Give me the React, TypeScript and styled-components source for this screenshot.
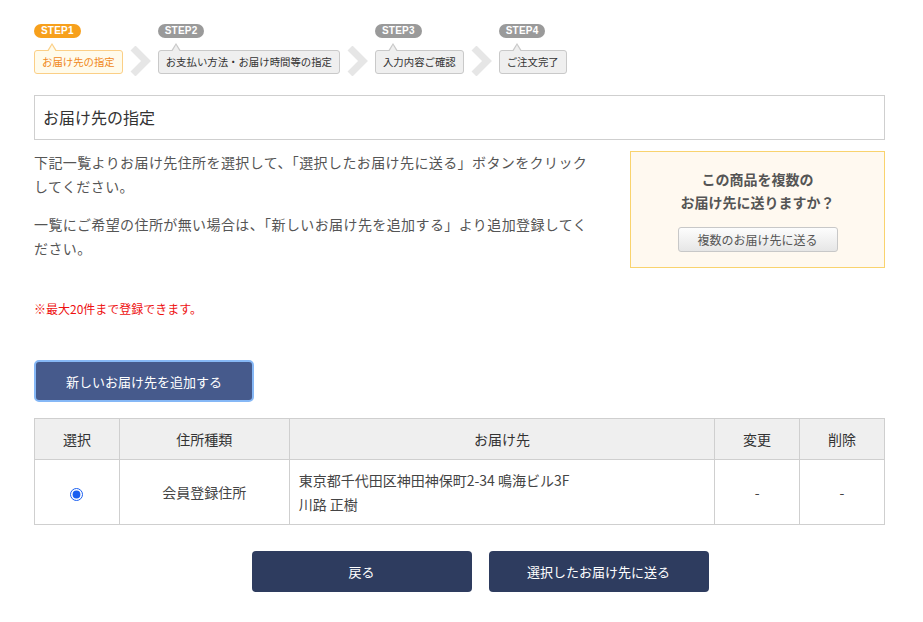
import React from "react";
import styled, { createGlobalStyle } from "styled-components";

const GlobalStyle = createGlobalStyle`
  html, body { margin: 0; padding: 0; background: #fff; }
  body {
    font-family: "Noto Sans CJK JP", "Noto Sans", "Liberation Sans", sans-serif;
    color: #333;
  }
  * { box-sizing: border-box; }
`;

const Page = styled.div`
  width: 851px;
  margin-left: 34px;
  padding-top: 24px;
  padding-bottom: 30px;
`;

const StepBar = styled.div`
  display: flex;
  align-items: flex-end;
`;

const Step = styled.div`
  display: flex;
  flex-direction: column;
  align-items: flex-start;
`;

const Badge = styled.div<{ $active?: boolean }>`
  height: 14px;
  padding: 0 7px;
  border-radius: 7px;
  background: ${(p) => (p.$active ? "#f7a01c" : "#9a9a9a")};
  color: #fff;
  font-family: "Liberation Sans", Arial, sans-serif;
  font-weight: bold;
  font-size: 10px;
  line-height: 14px;
  letter-spacing: 0.2px;
`;

const StepLabel = styled.div<{ $active?: boolean }>`
  position: relative;
  margin-top: 12px;
  height: 24px;
  padding: 0 7px;
  border-radius: 3px;
  border: 1px solid ${(p) => (p.$active ? "#fbcf86" : "#c9c9c9")};
  background: ${(p) => (p.$active ? "#fffbeb" : "#efefef")};
  color: ${(p) => (p.$active ? "#f08820" : "#333")};
  font-size: 10.4px;
  line-height: 22px;
  white-space: nowrap;
  &::before {
    content: "";
    position: absolute;
    left: 12px;
    top: -8px;
    border-left: 5px solid transparent;
    border-right: 5px solid transparent;
    border-bottom: 8px solid ${(p) => (p.$active ? "#fbcf86" : "#c9c9c9")};
  }
  &::after {
    content: "";
    position: absolute;
    left: 13px;
    top: -6px;
    border-left: 4px solid transparent;
    border-right: 4px solid transparent;
    border-bottom: 7px solid ${(p) => (p.$active ? "#fffbeb" : "#efefef")};
  }
`;

const Chevron = styled.svg`
  display: block;
  width: 22px;
  height: 30px;
  margin: 0 7px 0 6px;
  position: relative;
  top: 2px;
`;

const Arrow = () => (
  <Chevron viewBox="0 0 22 30">
    <path d="M4 2 L17 15 L4 28" fill="none" stroke="#e6e6e6" strokeWidth="7" />
  </Chevron>
);

const TitleBox = styled.div`
  margin-top: 21px;
  height: 45px;
  border: 1px solid #cfcfcf;
  padding: 0 8px;
  font-size: 16px;
  line-height: 43px;
  color: #333;
`;

const IntroRow = styled.div`
  display: flex;
  justify-content: space-between;
  align-items: flex-start;
  margin-top: 10px;
`;

const IntroText = styled.div`
  width: 555px;
`;

const Para = styled.p`
  margin: 0 0 14px 0;
  font-size: 14px;
  letter-spacing: 0.4px;
  line-height: 24px;
  color: #555;
`;

const Note = styled.p`
  margin: 40px 0 0 0;
  font-size: 12px;
  line-height: 18px;
  color: #ee1111;
`;

const MultiBox = styled.div`
  width: 255px;
  margin-top: 1px;
  padding: 16px 0 15px;
  background: #fff9f0;
  border: 1px solid #f9d36e;
  display: flex;
  flex-direction: column;
  align-items: center;
`;

const MultiTitle = styled.div`
  font-size: 14px;
  font-weight: bold;
  line-height: 23px;
  color: #555;
  text-align: center;
`;

const GrayButton = styled.button`
  margin-top: 13px;
  width: 160px;
  height: 25px;
  border: 1px solid #c8c8c8;
  border-radius: 3px;
  background: linear-gradient(#fdfdfd, #e6e6e6);
  font-family: inherit;
  font-size: 12px;
  color: #555;
  padding: 0;
`;

const AddButton = styled.button`
  margin-top: 42px;
  width: 220px;
  height: 42px;
  border-radius: 5px;
  border: 2px solid #86b8f6;
  background: #465a8c;
  color: #fff;
  font-family: inherit;
  font-size: 13px;
  padding: 0;
`;

const Table = styled.table`
  margin-top: 16px;
  width: 851px;
  border-collapse: collapse;
  font-size: 14px;
  color: #333;
`;

const Th = styled.th<{ $w: number }>`
  width: ${(p) => p.$w}px;
  height: 41px;
  border: 1px solid #cfcfcf;
  background: #efefef;
  font-weight: normal;
  text-align: center;
  padding: 0;
`;

const Td = styled.td<{ $left?: boolean }>`
  height: 65px;
  border: 1px solid #cfcfcf;
  text-align: ${(p) => (p.$left ? "left" : "center")};
  padding: ${(p) => (p.$left ? "8px 9px" : "0")};
  line-height: 24px;
  vertical-align: ${(p) => (p.$left ? "top" : "middle")};
  color: #444;
`;

const Radio = styled.input`
  margin: 0;
  width: 13px;
  height: 13px;
  accent-color: #1a5ff0;
  vertical-align: middle;
`;

const Actions = styled.div`
  margin-top: 26px;
  padding-left: 41px;
  display: flex;
  justify-content: center;
  gap: 17px;
`;

const NavyButton = styled.button`
  width: 220px;
  height: 41px;
  border: none;
  border-radius: 4px;
  background: #2e3c5f;
  color: #fff;
  font-family: inherit;
  font-size: 13px;
  padding: 0;
`;

const steps = [
  { badge: "STEP1", label: "お届け先の指定", active: true },
  { badge: "STEP2", label: "お支払い方法・お届け時間等の指定" },
  { badge: "STEP3", label: "入力内容ご確認" },
  { badge: "STEP4", label: "ご注文完了" },
];

export default function App() {
  return (
    <>
      <GlobalStyle />
      <Page>
        <StepBar>
          {steps.map((s, i) => (
            <React.Fragment key={s.badge}>
              {i > 0 && <Arrow />}
              <Step>
                <Badge $active={s.active}>{s.badge}</Badge>
                <StepLabel $active={s.active}>{s.label}</StepLabel>
              </Step>
            </React.Fragment>
          ))}
        </StepBar>

        <TitleBox>お届け先の指定</TitleBox>

        <IntroRow>
          <IntroText>
            <Para>
              下記一覧よりお届け先住所を選択して、「選択したお届け先に送る」ボタンをクリックしてください。
            </Para>
            <Para>
              一覧にご希望の住所が無い場合は、「新しいお届け先を追加する」より追加登録してください。
            </Para>
            <Note>※最大20件まで登録できます。</Note>
          </IntroText>
          <MultiBox>
            <MultiTitle>
              この商品を複数の
              <br />
              お届け先に送りますか？
            </MultiTitle>
            <GrayButton>複数のお届け先に送る</GrayButton>
          </MultiBox>
        </IntroRow>

        <AddButton>新しいお届け先を追加する</AddButton>

        <Table>
          <thead>
            <tr>
              <Th $w={85}>選択</Th>
              <Th $w={170}>住所種類</Th>
              <Th $w={426}>お届け先</Th>
              <Th $w={85}>変更</Th>
              <Th $w={85}>削除</Th>
            </tr>
          </thead>
          <tbody>
            <tr>
              <Td>
                <Radio type="radio" name="addr" defaultChecked />
              </Td>
              <Td>会員登録住所</Td>
              <Td $left>
                東京都千代田区神田神保町2-34 鳴海ビル3F
                <br />
                川路 正樹
              </Td>
              <Td>-</Td>
              <Td>-</Td>
            </tr>
          </tbody>
        </Table>

        <Actions>
          <NavyButton>戻る</NavyButton>
          <NavyButton>選択したお届け先に送る</NavyButton>
        </Actions>
      </Page>
    </>
  );
}
